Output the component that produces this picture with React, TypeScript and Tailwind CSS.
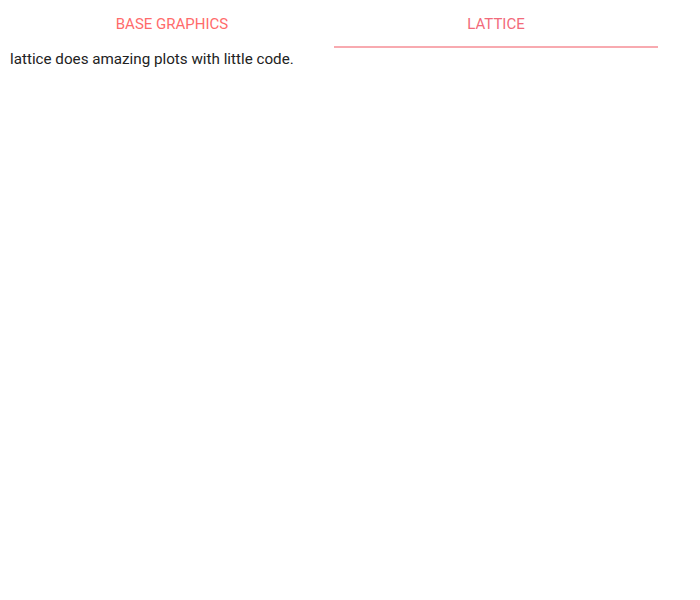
import React from "react";

export default function App() {
  return (
    <div className="w-[700px] h-[600px] bg-white" style={{ fontFamily: "Roboto, 'Liberation Sans', sans-serif" }}>
      <div className="pl-[10px] w-[658px]">
        <div className="flex">
          <div className="relative flex-1 h-[48px] flex items-center justify-center text-[15px] text-[#ff6b6b]">
            BASE GRAPHICS
          </div>
          <div className="relative flex-1 h-[48px] flex items-center justify-center text-[15px] text-[#f26a7a]">
            LATTICE
            <div className="absolute left-0 right-0 bottom-0 h-[2px] bg-[#f8aab0]" />
          </div>
        </div>
        <p className="text-[15.2px] text-[#222222] leading-[22px]">lattice does amazing plots with little code.</p>
      </div>
    </div>
  );
}
